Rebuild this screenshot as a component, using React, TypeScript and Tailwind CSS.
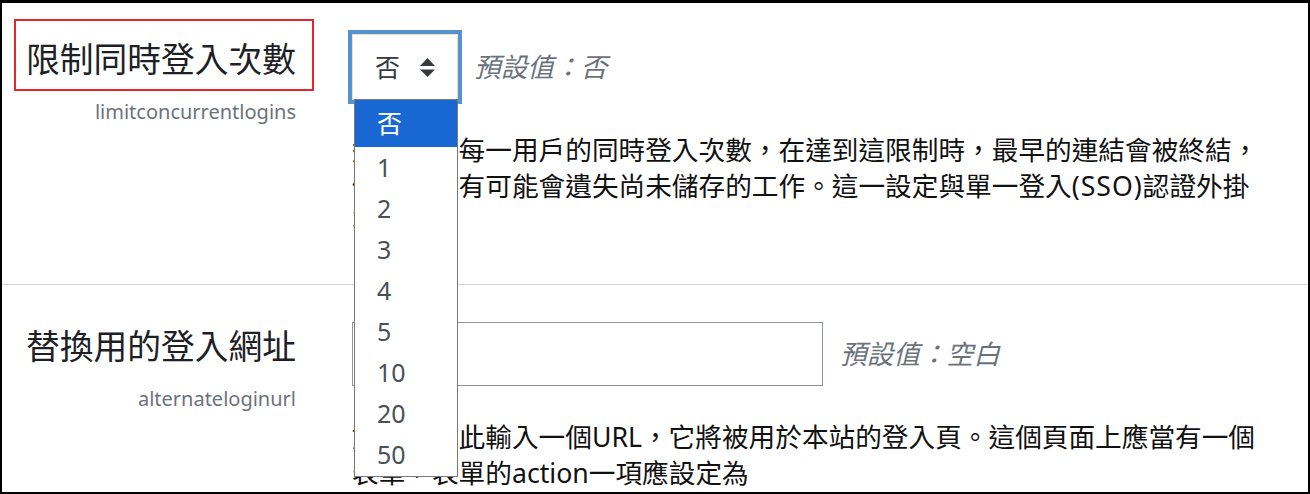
const options = ["否", "1", "2", "3", "4", "5", "10", "20", "50"];

const SortArrows = () => (
  <svg width="15" height="19" viewBox="0 0 15 19" className="block">
    <path d="M0 8 L7.5 0 L15 8 Z" fill="#343a40" />
    <path d="M0 11.5 L7.5 19 L15 11.5 Z" fill="#343a40" />
  </svg>
);

const App = () => {
  return (
    <div className="relative w-[1310px] h-[494px] overflow-hidden border-2 border-t-[3px] border-black bg-white font-['Noto_Sans','Noto_Sans_CJK_TC',sans-serif] text-[#1d2125]">
      {/* row 1: limitconcurrentlogins */}
      <section className="flex h-[282px] border-b border-[#d4d4d4]">
        <div className="w-[294px] shrink-0 pt-[36px] text-right">
          <div className="text-[33.75px] leading-[40px] whitespace-nowrap">限制同時登入次數</div>
          <div className="mt-[21px] text-[20px] leading-[24px] text-[#6a737b]">limitconcurrentlogins</div>
        </div>
        <div className="ml-[56px] pt-[31px]">
          <div className="flex items-center">
            <div className="relative">
              <div className="flex h-[66px] w-[106px] items-center border border-[#eee2bd] pl-[22px] shadow-[0_0_0_4px_#5592cf]">
                <span className="text-[25px] leading-none text-[#343a40]">否</span>
                <span className="ml-[20px]">
                  <SortArrows />
                </span>
              </div>
              {/* open option list */}
              <ul className="absolute left-[2px] top-[65px] z-10 w-[104px] border border-[#7a7a7a] bg-white pb-px text-[25px] text-[#495057]">
                {options.map((o, i) => (
                  <li
                    key={o}
                    className={
                      i === 0
                        ? "flex h-[47px] items-center bg-[#1967d2] pl-[22px] text-white"
                        : "flex h-[41px] items-center pl-[22px]"
                    }
                  >
                    {o}
                  </li>
                ))}
              </ul>
            </div>
            <span className="ml-[16px] text-[26.67px] italic text-[#6a737b]">預設值：否</span>
          </div>
          <div className="mt-[32px] text-[26.67px] leading-[36px] whitespace-nowrap text-[#111]">
            <div>這會限制每一用戶的同時登入次數，在達到這限制時，最早的連結會被終結，</div>
            <div>
              使用者們有可能會遺失尚未儲存的工作。這一設定與單一登入<span className="tracking-[1px]">(SSO)</span>認證外掛
            </div>
            <div>不相容。</div>
          </div>
        </div>
      </section>

      {/* row 2: alternateloginurl */}
      <section className="flex">
        <div className="w-[294px] shrink-0 pt-[41px] text-right">
          <div className="text-[33.75px] leading-[40px] whitespace-nowrap">替換用的登入網址</div>
          <div className="mt-[21px] text-[20px] leading-[24px] text-[#6a737b]">alternateloginurl</div>
        </div>
        <div className="ml-[56px] pt-[37px]">
          <div className="flex items-center">
            <input
              type="text"
              className="h-[64px] w-[471px] border border-[#8f959e] bg-white px-3 text-[25px] outline-none"
            />
            <span className="ml-[17px] text-[26.67px] italic text-[#6a737b]">預設值：空白</span>
          </div>
          <div className="mt-[33px] text-[26.67px] leading-[36px] whitespace-nowrap text-[#111]">
            <div>如果您在此輸入一個URL，它將被用於本站的登入頁。這個頁面上應當有一個</div>
            <div>表單，表單的action一項應設定為</div>
          </div>
        </div>
      </section>

      {/* annotation box */}
      <div className="pointer-events-none absolute left-[12px] top-[16px] h-[72px] w-[300px] border-2 border-[#e3262c]" />
    </div>
  );
};

export default App;
